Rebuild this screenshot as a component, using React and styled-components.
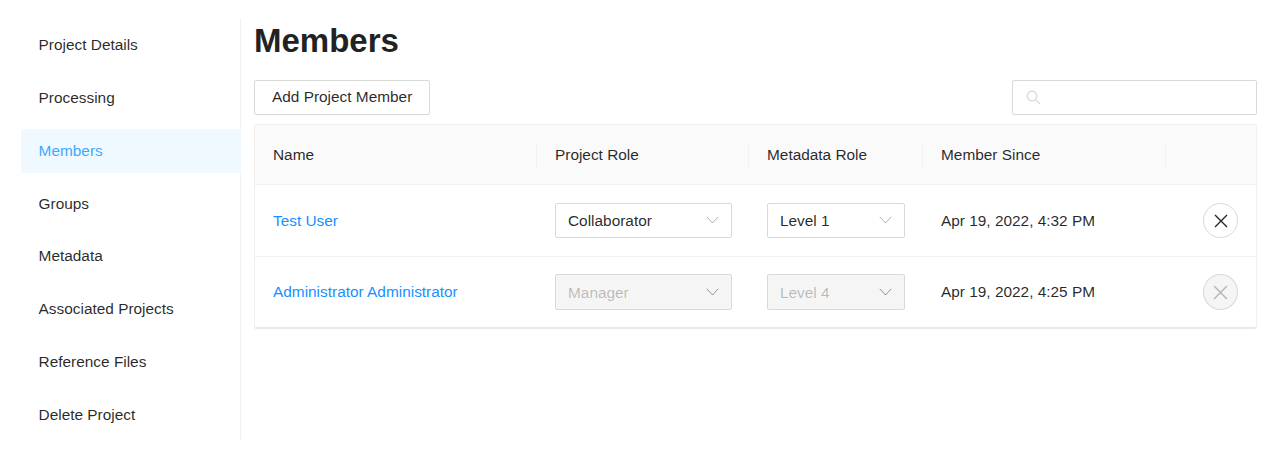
import styled, { createGlobalStyle } from "styled-components";

const GlobalStyle = createGlobalStyle`
  html, body {
    margin: 0;
    background: #fff;
    font-family: "Liberation Sans", Arial, sans-serif;
    font-size: 15.4px;
    color: rgba(0, 0, 0, 0.85);
  }
`;

const Layout = styled.div`
  display: flex;
  align-items: flex-start;
  width: 1273px;
  height: 459px;
  padding: 18px 16px 0 21px;
  box-sizing: border-box;
`;

const Sidebar = styled.nav`
  width: 220px;
  height: 422px;
  flex: none;
  box-sizing: border-box;
  border-right: 1px solid #f0f0f0;
  padding-top: 5px;
  display: flex;
  flex-direction: column;
  gap: 8.85px;
`;

const MenuItem = styled.div`
  height: 44px;
  line-height: 44px;
  padding-left: 17.6px;
  margin-right: -1px;
  color: ${(p) => (p.$active ? "#40a9ff" : "rgba(0, 0, 0, 0.85)")};
  background: ${(p) => (p.$active ? "#eff9ff" : "transparent")};
`;

const Content = styled.main`
  flex: 1;
  min-width: 0;
  padding-left: 13px;
`;

const Title = styled.h1`
  margin: 0;
  height: 62px;
  padding-top: 1px;
  box-sizing: border-box;
  font-size: 33px;
  line-height: 44px;
  font-weight: 700;
  color: #222;
`;

const Toolbar = styled.div`
  display: flex;
  justify-content: space-between;
  margin-bottom: 9px;
`;

const Button = styled.button`
  height: 35px;
  padding: 0 17px 2px;
  background: #fff;
  border: 1px solid #d9d9d9;
  border-radius: 2px;
  font: inherit;
  color: rgba(0, 0, 0, 0.85);
  box-shadow: 0 1px 0 rgba(0, 0, 0, 0.015);
`;

const Search = styled.div`
  width: 245px;
  height: 35px;
  box-sizing: border-box;
  border: 1px solid #d9d9d9;
  border-radius: 2px;
  display: flex;
  align-items: center;
  padding-left: 13px;
  background: #fff;
`;

const Panel = styled.div`
  border: 1px solid #f0f0f0;
  border-bottom: 2px solid #e9e9e9;
  border-radius: 2px;
  box-sizing: border-box;
  height: 205px;
`;

const Row = styled.div`
  display: grid;
  grid-template-columns: 282px 212px 174px 243px 1fr;
  align-items: center;
  box-sizing: border-box;
  height: ${(p) => p.$h}px;
  background: ${(p) => (p.$head ? "#fafafa" : "#fff")};
  border-bottom: ${(p) => (p.$last ? "none" : "1px solid #f0f0f0")};
`;

const HeadCell = styled.div`
  position: relative;
  padding-left: 18px;
  color: rgba(0, 0, 0, 0.85);

  &:not(:last-child)::after {
    content: "";
    position: absolute;
    right: 0;
    top: 50%;
    height: 24px;
    margin-top: -12px;
    width: 1px;
    background: #f0f0f0;
  }
`;

const Cell = styled.div`
  padding-left: 18px;
`;

const ActionCell = styled.div`
  display: flex;
  justify-content: flex-end;
  padding-right: 18px;
`;

const NameLink = styled.a`
  color: #1890ff;
  text-decoration: none;
`;

const Select = styled.div`
  width: ${(p) => p.$w}px;
  height: ${(p) => (p.$disabled ? 36 : 35)}px;
  box-sizing: border-box;
  display: flex;
  align-items: center;
  justify-content: space-between;
  padding: ${(p) => (p.$disabled ? "1px" : "0")} 12px 0 12px;
  border: 1px solid #d9d9d9;
  border-radius: 2px;
  background: ${(p) => (p.$disabled ? "#f5f5f5" : "#fff")};
  color: ${(p) => (p.$disabled ? "rgba(0, 0, 0, 0.25)" : "rgba(0, 0, 0, 0.85)")};
`;

const RemoveButton = styled.button`
  width: 35px;
  height: ${(p) => (p.$disabled ? 36 : 35)}px;
  padding: 0;
  display: flex;
  align-items: center;
  justify-content: center;
  border: 1px solid #d9d9d9;
  border-radius: 50%;
  background: ${(p) => (p.$disabled ? "#f5f5f5" : "#fff")};
  color: ${(p) => (p.$disabled ? "rgba(0, 0, 0, 0.25)" : "rgba(0, 0, 0, 0.85)")};
`;

const ChevronSvg = styled.svg`
  color: ${(p) => (p.$disabled ? "rgba(0, 0, 0, 0.4)" : "rgba(0, 0, 0, 0.3)")};
  margin-top: ${(p) => (p.$disabled ? "-2px" : "-1px")};
`;

const Chevron = ({ disabled }) => (
  <ChevronSvg $disabled={disabled} width="13" height="8" viewBox="0 0 13 8" fill="none" stroke="currentColor" strokeWidth="1">
    <path d="M0.8 0.8 L6.5 7 L12.2 0.8" />
  </ChevronSvg>
);

const CloseIcon = ({ size }) => (
  <svg width={size} height={size} viewBox="0 0 14 14" fill="none" stroke="currentColor" strokeWidth="1.4">
    <path d="M1 1 L13 13 M13 1 L1 13" />
  </svg>
);

const SearchIcon = () => (
  <svg width="15" height="15" viewBox="0 0 15 15" fill="none" stroke="#d6d6d6" strokeWidth="1.2">
    <circle cx="6" cy="6" r="4.8" />
    <path d="M9.6 9.6 L14.2 14.2" />
  </svg>
);

const menu = [
  "Project Details",
  "Processing",
  "Members",
  "Groups",
  "Metadata",
  "Associated Projects",
  "Reference Files",
  "Delete Project",
];

const members = [
  { name: "Test User", role: "Collaborator", level: "Level 1", since: "Apr 19, 2022, 4:32 PM", h: 72 },
  { name: "Administrator Administrator", role: "Manager", level: "Level 4", since: "Apr 19, 2022, 4:25 PM", h: 70, locked: true },
];

const App = () => {
  return (
    <Layout>
      <GlobalStyle />
      <Sidebar>
        {menu.map((item) => (
          <MenuItem key={item} $active={item === "Members"}>
            {item}
          </MenuItem>
        ))}
      </Sidebar>
      <Content>
        <Title>Members</Title>
        <Toolbar>
          <Button>Add Project Member</Button>
          <Search>
            <SearchIcon />
          </Search>
        </Toolbar>
        <Panel>
          <Row $head $h={60}>
            <HeadCell>Name</HeadCell>
            <HeadCell>Project Role</HeadCell>
            <HeadCell>Metadata Role</HeadCell>
            <HeadCell>Member Since</HeadCell>
            <HeadCell />
          </Row>
          {members.map((m, i) => (
            <Row key={m.name} $h={m.h} $last={i === members.length - 1}>
              <Cell>
                <NameLink href="#">{m.name}</NameLink>
              </Cell>
              <Cell>
                <Select $w={177} $disabled={m.locked}>
                  {m.role}
                  <Chevron disabled={m.locked} />
                </Select>
              </Cell>
              <Cell>
                <Select $w={138} $disabled={m.locked}>
                  {m.level}
                  <Chevron disabled={m.locked} />
                </Select>
              </Cell>
              <Cell>{m.since}</Cell>
              <ActionCell>
                <RemoveButton $disabled={m.locked}>
                  <CloseIcon size={m.locked ? 15 : 14} />
                </RemoveButton>
              </ActionCell>
            </Row>
          ))}
        </Panel>
      </Content>
    </Layout>
  );
};

export default App;
